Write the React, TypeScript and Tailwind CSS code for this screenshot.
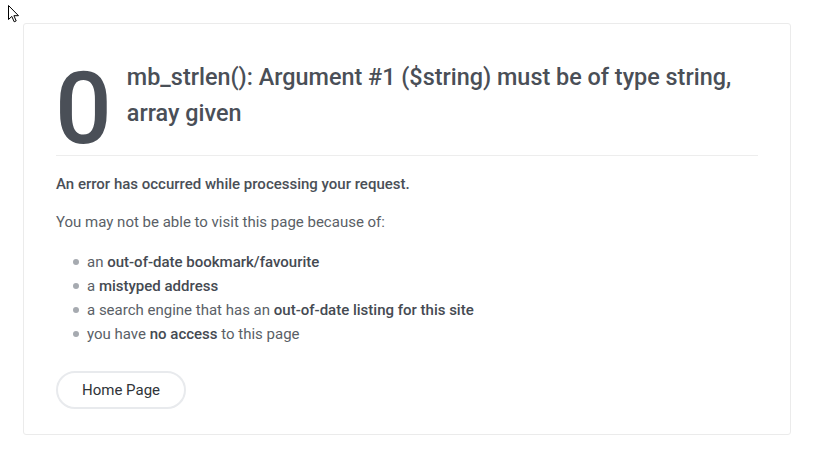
import React from "react";

const reasons: React.ReactNode[] = [
  <>
    an <strong className="font-medium text-[#454a52]">out-of-date bookmark/favourite</strong>
  </>,
  <>
    a <strong className="font-medium text-[#454a52]">mistyped address</strong>
  </>,
  <>
    a search engine that has an{" "}
    <strong className="font-medium text-[#454a52]">out-of-date listing for this site</strong>
  </>,
  <>
    you have <strong className="font-medium text-[#454a52]">no access</strong> to this page
  </>,
];

const Cursor = () => (
  <svg className="absolute left-[8px] top-[5px]" width="12" height="18" viewBox="0 0 12 18">
    <path
      d="M0.5 0.5 L0.5 14.5 L3.8 11.4 L6.2 16.8 L8.2 15.9 L5.9 10.7 L10.5 10.7 Z"
      fill="white"
      stroke="black"
      strokeWidth="1"
      strokeLinejoin="miter"
    />
  </svg>
);

export default function App() {
  return (
    <div
      className="relative min-h-[456px] w-[818px] bg-white pl-[23px] pt-[23px]"
      style={{ fontFamily: "Roboto, 'Liberation Sans', sans-serif" }}
    >
      <Cursor />
      <div className="flex h-[412px] w-[768px] flex-col rounded-[3px] border border-[#ebebeb] px-[32px] pt-[35px]">
        <div className="flex items-start border-b border-[#ededed]">
          <span className="-ml-[1px] h-[96px] text-[100px] font-medium leading-[100px] text-[#4a4f57]">0</span>
          <h1 className="ml-[15px] text-[23.4px] font-medium leading-[36px] text-[#4a4f57]">
            mb_strlen(): Argument #1 ($string) must be of type string, array given
          </h1>
        </div>
        <p className="mt-[18px] text-[15px] font-medium leading-[20px] text-[#4a4f57]">
          An error has occurred while processing your request.
        </p>
        <p className="mt-[18px] text-[15px] leading-[20px] text-[#5a5f67]">
          You may not be able to visit this page because of:
        </p>
        <ul className="mt-[18px] flex flex-col pl-[17px] text-[15px] leading-[24px] text-[#5a5f67]">
          {reasons.map((r, i) => (
            <li key={i} className="flex items-center">
              <span className="mr-[8px] h-[6px] w-[6px] rounded-full bg-[#a6aab0]" />
              <span>{r}</span>
            </li>
          ))}
        </ul>
        <div className="mt-[25px]">
          <button className="h-[38px] rounded-full border-2 border-[#e8eaed] px-[24px] text-[15px] text-[#2f3338]">
            Home Page
          </button>
        </div>
      </div>
    </div>
  );
}
